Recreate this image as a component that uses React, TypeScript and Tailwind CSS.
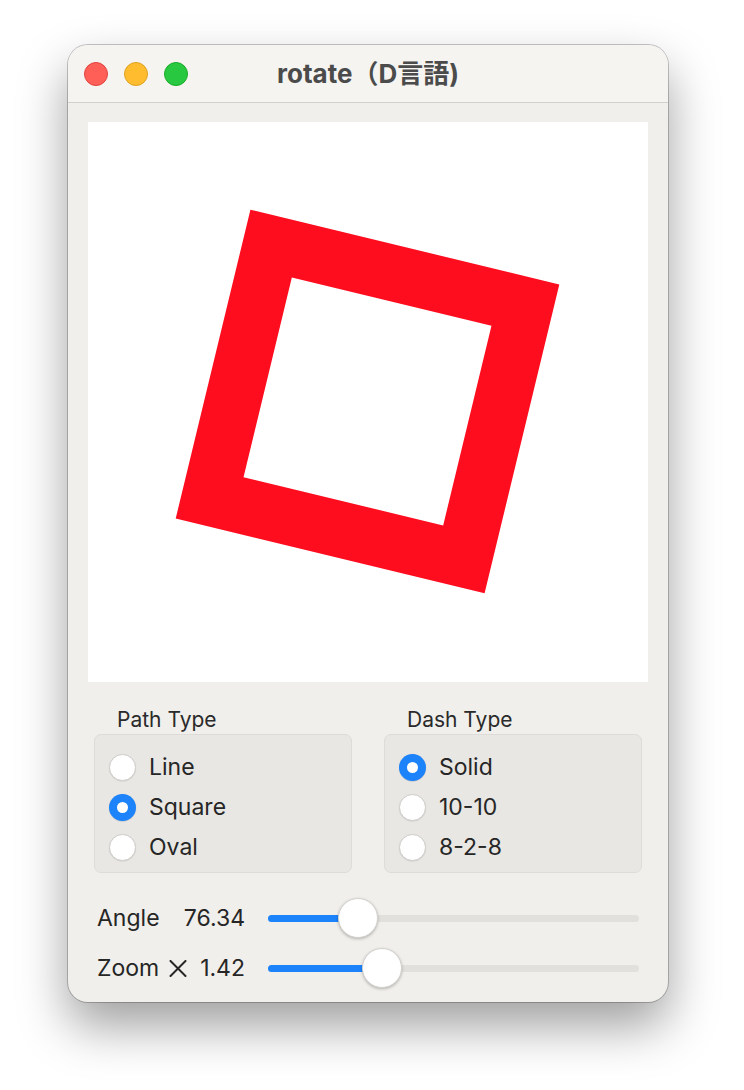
import React from "react";

const FONT = { fontFamily: '"Inter", "Noto Sans CJK JP", "Liberation Sans", sans-serif' };

function Radio({ checked, label }: { checked?: boolean; label: string }) {
  return (
    <div className="flex h-[40px] items-center">
      {checked ? (
        <div className="flex h-[27px] w-[27px] items-center justify-center rounded-full bg-[#1c83fb] shadow-[0_0.5px_1px_rgba(0,0,0,0.2)]">
          <div className="h-[11px] w-[11px] rounded-full bg-white" />
        </div>
      ) : (
        <div className="h-[27px] w-[27px] rounded-full border border-[#cfcdca] bg-white shadow-[0_0.5px_1px_rgba(0,0,0,0.12)]" />
      )}
      <span className="ml-[13px] text-[23px] leading-none text-[#262626]">{label}</span>
    </div>
  );
}

function Group({ title, items, selected }: { title: string; items: string[]; selected: number }) {
  return (
    <div className="flex w-[258px] flex-col">
      <div className="h-[26px] pl-[23px] text-[21px] leading-[26px] text-[#2a2a2a]">{title}</div>
      <div className="mt-px flex h-[139px] flex-col rounded-[7px] border border-[#dedcd8] bg-[#e8e7e3] pl-[14px] pt-[12px]">
        {items.map((it, i) => (
          <Radio key={it} label={it} checked={i === selected} />
        ))}
      </div>
    </div>
  );
}

function Slider({ frac }: { frac: number }) {
  const travel = 331;
  const thumbLeft = frac * travel;
  return (
    <div className="relative ml-[23px] h-[40px] w-[371px]">
      <div className="absolute left-0 right-0 top-[17px] h-[7px] rounded-full bg-[#e2e0dc]" />
      <div
        className="absolute left-0 top-[17px] h-[7px] rounded-full bg-[#1c83fb]"
        style={{ width: thumbLeft + 20 }}
      />
      <div
        className="absolute top-0 h-[40px] w-[40px] rounded-full border border-[#d4d2cf] bg-white shadow-[0_1px_3px_rgba(0,0,0,0.25)]"
        style={{ left: thumbLeft }}
      />
    </div>
  );
}

export default function App() {
  return (
    <div className="h-[1090px] w-[744px] bg-white pl-[68px] pt-[45px]" style={FONT}>
      <div className="flex h-[957px] w-[600px] flex-col overflow-hidden rounded-[20px] bg-[#f0efeb] shadow-[0_0_0_1px_rgba(0,0,0,0.22),0_24px_50px_rgba(0,0,0,0.38)]">
        <div className="relative flex h-[58px] items-center border-b border-[#d2d0cc] bg-[#f5f4f0]">
          <div className="flex items-center gap-[16px] pl-[16px]">
            <div className="h-[24px] w-[24px] rounded-full border border-[#e0443e] bg-[#ff5f57]" />
            <div className="h-[24px] w-[24px] rounded-full border border-[#dea123] bg-[#febc2e]" />
            <div className="h-[24px] w-[24px] rounded-full border border-[#1aab29] bg-[#28c840]" />
          </div>
          <div className="absolute inset-0 flex items-center justify-center text-[26px] font-bold text-[#4b4b4b]">
            rotate（D言語)
          </div>
        </div>
        <div className="flex flex-col px-[20px] pt-[19px]">
          <div className="h-[560px] w-[560px] bg-white">
            <svg width="560" height="560" viewBox="0 0 560 560">
              <rect
                x={279.5 - 130.8}
                y={279.5 - 130.8}
                width={261.6}
                height={261.6}
                fill="none"
                stroke="#fe0d1f"
                strokeWidth={56.2}
                strokeLinejoin="miter"
                transform="rotate(13.6 279.5 279.5)"
              />
            </svg>
          </div>
        </div>
        <div className="mt-[25px] flex gap-[32px] px-[26px]">
          <Group title="Path Type" items={["Line", "Square", "Oval"]} selected={1} />
          <Group title="Dash Type" items={["Solid", "10-10", "8-2-8"]} selected={0} />
        </div>
        <div className="mt-[25px] flex flex-col gap-[10px] pl-[29px]">
          <div className="flex h-[40px] items-center text-[23px] text-[#262626]">
            <div className="flex w-[148px] items-center">
              <span>Angle</span>
              <span className="ml-auto">76.34</span>
            </div>
            <Slider frac={76.34 / 360} />
          </div>
          <div className="flex h-[40px] items-center text-[23px] text-[#262626]">
            <div className="flex w-[148px] items-center">
              <span>Zoom</span>
              <svg className="ml-[10px]" width="18" height="17" viewBox="0 0 18 17" aria-label="✕">
                <path d="M1.5 1 L16.5 16 M16.5 1 L1.5 16" stroke="#262626" strokeWidth="2" strokeLinecap="round" fill="none" />
              </svg>
              <span className="ml-auto">1.42</span>
            </div>
            <Slider frac={1.42 / 5} />
          </div>
        </div>
      </div>
    </div>
  );
}
